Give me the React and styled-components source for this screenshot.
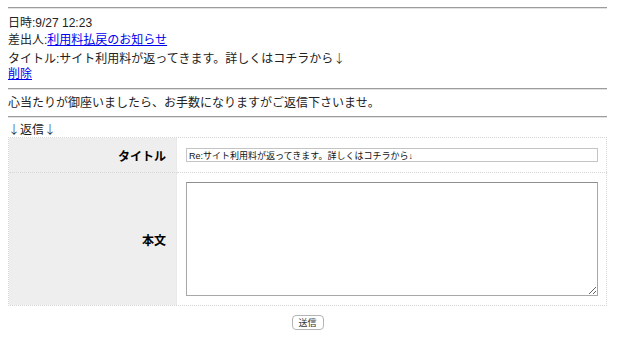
import React from "react"
import styled, { createGlobalStyle } from "styled-components"

const Global = createGlobalStyle`
  body {
    margin: 0;
    background: #fff;
    font-family: "Liberation Sans", "Noto Sans CJK JP", sans-serif;
    font-size: 12px;
    color: #222;
  }
`

const Page = styled.div`
  width: 599px;
  margin-left: 8px;
  padding-top: 7px;
`

const Rule = styled.hr`
  margin: 0;
  height: 0;
  border: 0;
  border-top: 1px solid #9c9c9c;
  border-bottom: 1px solid #e2e2e2;
`

const Block = styled.div`
  margin: ${(p) => p.$m || "5px 0 4px"};
`

const Line = styled.div`
  height: 17px;
  line-height: 17px;
  white-space: nowrap;
`

const Arrow = styled.span`
  font-family: "Noto Sans CJK JP", sans-serif;
  font-weight: 300;
`

const Link = styled.a`
  color: #0000ee;
  text-decoration: underline;
`

const Form = styled.div`
  display: grid;
  grid-template-columns: 168px 1fr;
  grid-template-rows: 35px 132px;
  border: 1px dotted #d6d6d6;
`

const Label = styled.div`
  background: #eeeeee;
  display: flex;
  align-items: center;
  justify-content: flex-end;
  padding-right: 10px;
  font-weight: bold;
  color: #000;
  border-bottom: ${(p) => (p.$last ? "none" : "1px dotted #d6d6d6")};
  border-right: 1px dotted #e4e4e4;
`

const Field = styled.div`
  padding: 0 9px;
  border-bottom: ${(p) => (p.$last ? "none" : "1px dotted #d6d6d6")};
  display: flex;
  align-items: center;
`

const TitleInput = styled.input`
  box-sizing: border-box;
  width: 412px;
  height: 14px;
  padding: 0 2px;
  border: 1px solid #c4c4c4;
  font-family: "Liberation Sans", "Noto Sans CJK JP", sans-serif;
  font-size: 9px;
  color: #111;
  outline: none;
`

const Body = styled.textarea`
  box-sizing: border-box;
  width: 412px;
  height: 114px;
  border: 1px solid #a8a8a8;
  border-top-color: #8e8e8e;
  outline: none;
`

const Actions = styled.div`
  display: flex;
  justify-content: center;
  margin-top: 9px;
`

const Submit = styled.button`
  width: 32px;
  height: 15px;
  padding: 0;
  font-family: "Noto Sans CJK JP", sans-serif;
  font-size: 9px;
  line-height: 13px;
  color: #333;
  background: #fff;
  border: 1px solid #b4b4b4;
  border-radius: 4px;
`

export default function App() {
  return (
    <Page>
      <Global />
      <Rule />
      <Block $m="6px 0 5px">
        <Line>日時:9/27 12:23</Line>
        <Line>
          差出人:<Link href="#">利用料払戻のお知らせ</Link>
        </Line>
        <Line>
          タイトル:サイト利用料が返ってきます。詳しくはコチラから<Arrow>↓</Arrow>
        </Line>
        <Line>
          <Link href="#">削除</Link>
        </Line>
      </Block>
      <Rule />
      <Block $m="5px 0 4px">
        <Line>心当たりが御座いましたら、お手数になりますがご返信下さいませ。</Line>
      </Block>
      <Rule />
      <Block $m="2px 0 0">
        <Line>
          <Arrow>↓</Arrow>返信<Arrow>↓</Arrow>
        </Line>
      </Block>
      <Form>
        <Label>タイトル</Label>
        <Field>
          <TitleInput defaultValue="Re:サイト利用料が返ってきます。詳しくはコチラから↓" />
        </Field>
        <Label $last>本文</Label>
        <Field $last>
          <Body />
        </Field>
      </Form>
      <Actions>
        <Submit>送信</Submit>
      </Actions>
    </Page>
  )
}
